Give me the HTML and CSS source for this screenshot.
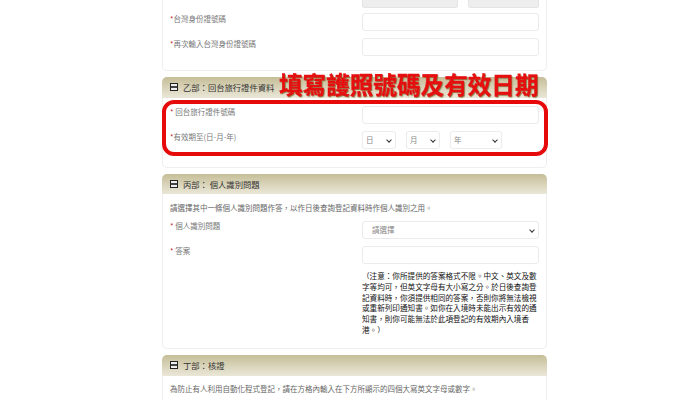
FILE: index.html
```html
<!DOCTYPE html>
<html lang="zh-Hant">
<head>
<meta charset="utf-8">
<title>登記</title>
<link rel="stylesheet" href="styles.css">
</head>
<body>
<main class="page">
  <section class="card card-first">
    <div class="stub-row"><span class="stub stub-a"></span><span class="stub stub-b"></span></div>
    <div class="row row-first"><label class="label"><b>*</b>台灣身份證號碼</label><span class="input"></span></div>
    <div class="row"><label class="label"><b>*</b>再次輸入台灣身份證號碼</label><span class="input"></span></div>
  </section>

  <section class="block block-b">
    <h2 class="head"><span class="icon"></span>乙部：回台旅行證件資料</h2>
    <div class="card">
      <div class="row"><label class="label"><b>*</b> 回台旅行證件號碼</label><span class="input"></span></div>
      <div class="row"><label class="label"><b>*</b>有效期至(日-月-年)</label>
        <div class="dates">
          <span class="input sel sel-s">日</span>
          <span class="input sel sel-s">月</span>
          <span class="input sel sel-l">年</span>
        </div>
      </div>
    </div>
    <p class="callout">填寫護照號碼及有效日期</p>
    <div class="ring"></div>
  </section>

  <section class="block">
    <h2 class="head"><span class="icon"></span>丙部： 個人識別問題</h2>
    <div class="card card-c">
      <p class="intro">請選擇其中一條個人識別問題作答，以作日後查詢登記資料時作個人識別之用。</p>
      <div class="row"><label class="label"><b>*</b> 個人識別問題</label><span class="input sel sel-q">請選擇</span></div>
      <div class="row"><label class="label"><b>*</b> 答案</label><span class="input"></span></div>
      <p class="note">（注意：你所提供的答案格式不限。中文、英文及數字等均可，但英文字母有大小寫之分。於日後查詢登記資料時，你須提供相同的答案，否則你將無法檢視或重新列印通知書。如你在入境時未能出示有效的通知書，則你可能無法於此項登記的有效期內入境香港。）</p>
    </div>
  </section>

  <section class="block">
    <h2 class="head"><span class="icon"></span>丁部：核證</h2>
    <div class="card">
      <p class="intro">為防止有人利用自動化程式登記，請在方格內輸入在下方所顯示的四個大寫英文字母或數字。</p>
    </div>
  </section>
</main>
</body>
</html>
```

FILE: styles.css
```css
* { box-sizing: border-box; }
html, body { margin: 0; height: 400px; overflow: hidden; background: #fff; }
body { font-family: "Noto Sans CJK TC", "Liberation Sans", sans-serif; font-size: 7.5px; color: #777; }
.page { width: 385px; margin-left: 162px; display: flex; flex-direction: column; gap: 6px; filter: blur(0.3px); }
.block { position: relative; }
.card { border: 1px solid #eee; border-top: 0; border-radius: 0 0 5px 5px; padding: 8.5px 7px 0 7px; background: #fff; }
.card-first { height: 71px; padding-top: 0; }
.stub-row { display: flex; gap: 10px; margin-left: 192px; height: 8px; }
.stub { display: block; height: 8px; background: #eee; border: 1px solid #e4e4e4; border-top: 0; border-radius: 0 0 3px 3px; }
.stub-a { width: 96px; }
.stub-b { width: 71px; }
.row { display: flex; justify-content: space-between; align-items: flex-start; height: 25px; }
.row-first { margin-top: 5px; }
.label { line-height: 11px; margin-top: -0.5px; }
.label b { color: #b22; font-weight: 400; }
.input { display: block; width: 177px; height: 18px; border: 1px solid #ebebeb; border-radius: 3px; background: #fff; position: relative; line-height: 16px; padding-left: 3px; color: #888; }
.dates { display: flex; gap: 10px; width: 177px; }
.sel::after { content: ""; position: absolute; right: 4px; top: 6px; width: 3px; height: 3px; border-right: 1px solid #333; border-bottom: 1px solid #333; transform: rotate(45deg); }
.sel-s { width: 34px; }
.sel-l { width: 52px; }
.sel-q { padding-left: 9px; }
.head { margin: 0; height: 20.5px; display: flex; align-items: center; padding-left: 8px; font-size: 8.3px; font-weight: 400; color: #333; border-radius: 5px 5px 0 0; background: linear-gradient(#c6be98, #eae7d8); }
.icon { width: 8px; height: 8px; margin-right: 5px; border: 1.5px solid #222; background: linear-gradient(#eee 30%, #444 30%, #444 65%, #eee 65%); flex: none; }
.block-b .card { height: 70px; }
.callout { position: absolute; margin: 0; top: -7px; left: 117px; width: 265px; font-size: 23.6px; line-height: 28px; font-weight: 700; color: #e60f0f; white-space: nowrap; -webkit-text-stroke: 0.3px #e60f0f; text-shadow: 1px 1px 1px #8a7f4c; }
.ring { position: absolute; left: 0; top: 23px; width: 386px; height: 56px; border: 4px solid #e60a0a; border-radius: 12px; }
.card-c { height: 155px; }
.intro { margin: -1px 0 8px; line-height: 11px; white-space: nowrap; color: #666; }
.note { margin: 0.5px 0 0 192px; width: 177px; font-size: 7.6px; line-height: 10.8px; color: #111; }
```
